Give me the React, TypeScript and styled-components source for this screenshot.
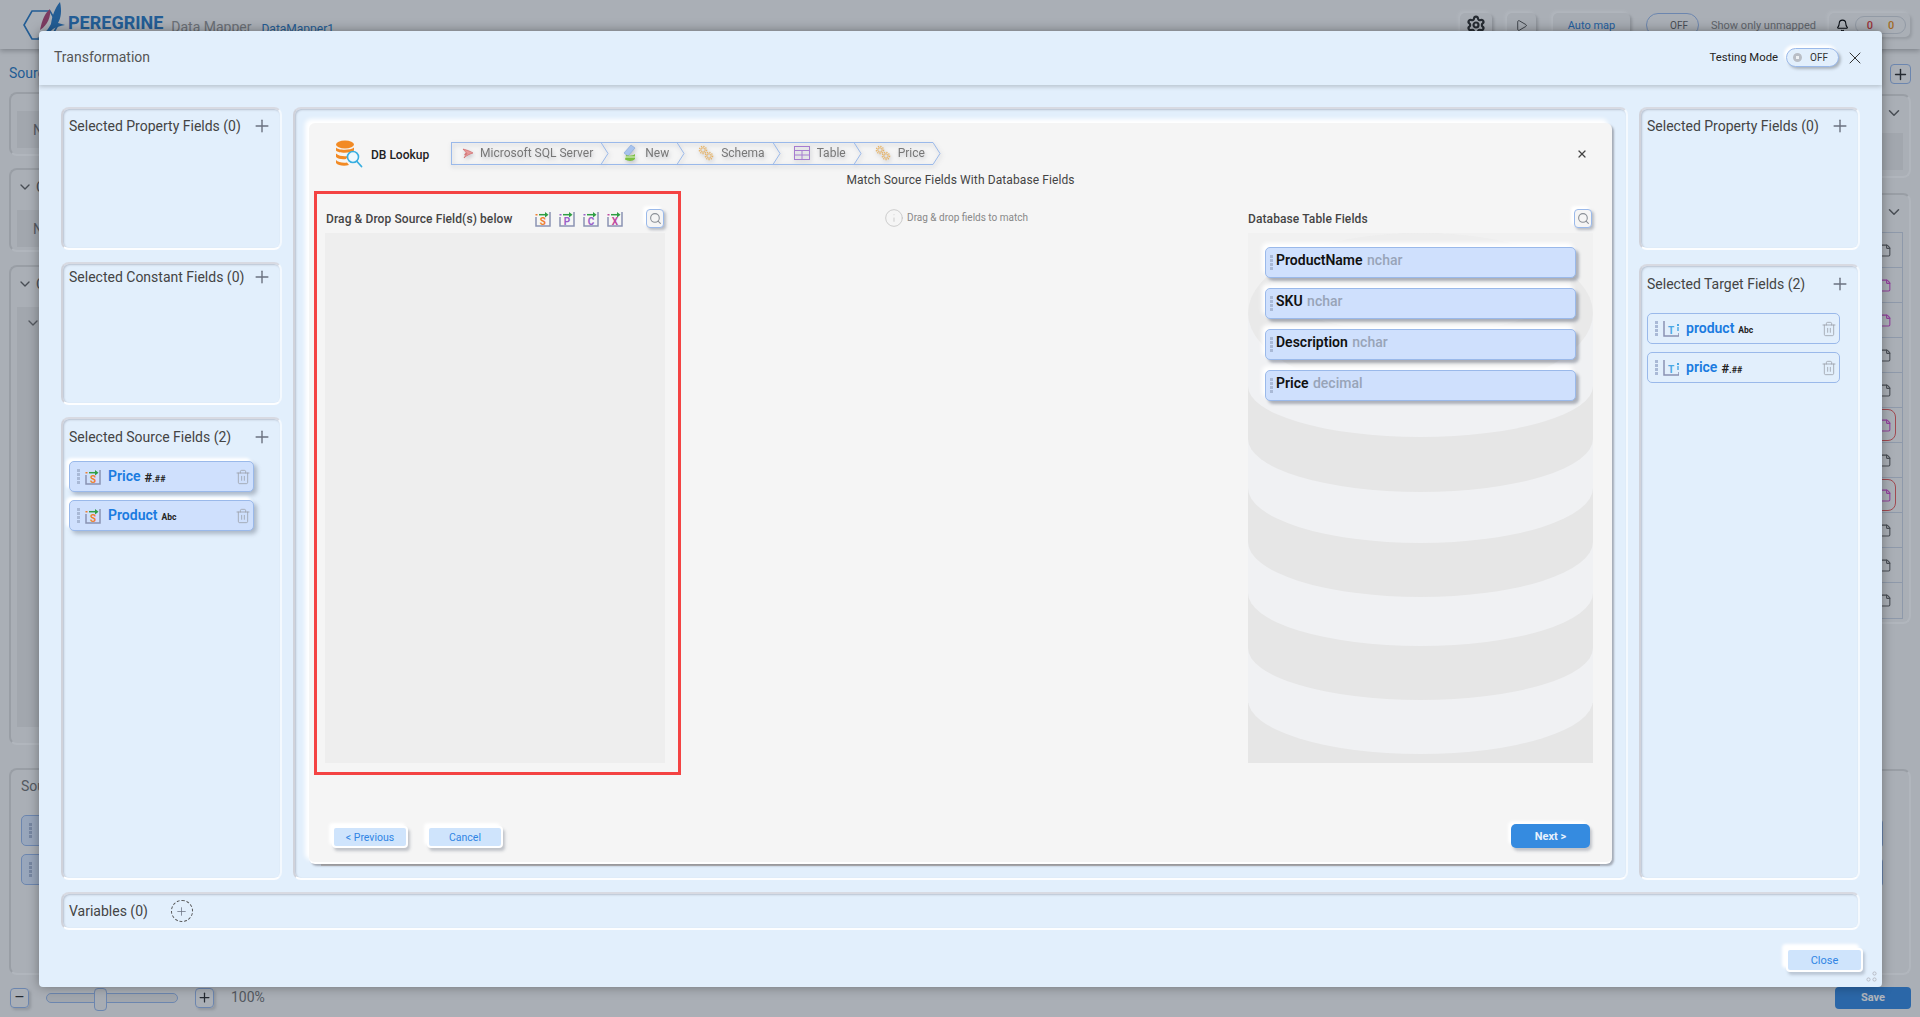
import React from "react";
import styled, { createGlobalStyle } from "styled-components";
import { Bell, ChevronDown, File, Info, Play, Plus, Search, Settings, Trash2, X } from "lucide-react";

const GlobalStyle = createGlobalStyle`
  html, body {
    margin: 0;
    overflow: hidden;
    font-family: Roboto, "Liberation Sans", sans-serif;
    background: #f5f5f5;
  }
  #root {
    width: 1920px;
    height: 1017px;
  }
`;

const BLUE_BORDER = "#9ab9ea";
const MODAL_BG = "#e2effc";

/* ---------- page behind the dialog ---------- */

const Page = styled.div`
  position: relative;
  width: 1920px;
  height: 1017px;
  display: flex;
  flex-direction: column;
  overflow: hidden;
  background: #f5f5f5;
`;

const TopBar = styled.header`
  height: 49px;
  flex: none;
  display: flex;
  align-items: flex-start;
  padding-left: 22px;
  box-sizing: border-box;
  box-shadow: 0 2px 5px rgba(0, 0, 0, 0.25);
`;

const BrandName = styled.span`
  margin: 11px 0 0 2px;
  font-size: 18px;
  line-height: 24px;
  font-weight: 700;
  color: #2e7cc4;
`;

const AppName = styled.span`
  margin: 18px 0 0 8px;
  font-size: 14px;
  line-height: 18px;
  color: #999;
`;

const DocName = styled.span`
  margin: 21px 0 0 10px;
  font-size: 12px;
  line-height: 16px;
  color: #2e7cc4;
`;

const TopTools = styled.div`
  margin-left: auto;
  display: flex;
  align-items: center;
  height: 24px;
  margin-top: 13px;
  padding-right: 10px;
`;

const TopButton = styled.div<{ $w: number; $ml: number }>`
  width: ${(p) => p.$w}px;
  margin-left: ${(p) => p.$ml}px;
  height: 24px;
  box-sizing: border-box;
  display: flex;
  align-items: center;
  justify-content: center;
  border-radius: 5px;
  font-size: 11px;
  color: #2e7fd4;
  background: #f0f0f0;
  box-shadow: -2px -2px 3px #fff, 2px 2px 3px rgba(0, 0, 0, 0.18);
  svg {
    color: #333;
  }
`;

const BgToggle = styled.div`
  width: 53px;
  height: 24px;
  margin-left: 16px;
  box-sizing: border-box;
  border: 1px solid ${BLUE_BORDER};
  border-radius: 12px;
  display: flex;
  align-items: center;
  justify-content: flex-end;
  padding-right: 10px;
  font-size: 10px;
  color: #666;
`;

const BgHint = styled.span`
  margin-left: 12px;
  width: 118px;
  font-size: 11px;
  color: #888;
`;

const Counter = styled.div`
  width: 81px;
  height: 24px;
  display: flex;
  align-items: center;
  gap: 6px;
  padding-left: 7px;
  box-sizing: border-box;
  border-radius: 5px;
  box-shadow: -2px -2px 3px #fff, 2px 2px 3px rgba(0, 0, 0, 0.12);
`;

const CountPill = styled.div`
  flex: 1;
  height: 18px;
  margin-right: 4px;
  box-sizing: border-box;
  border: 1px solid #d2d6dc;
  border-radius: 9px;
  display: flex;
  align-items: center;
  justify-content: center;
  gap: 15px;
  font-size: 11px;
  font-weight: 500;
  b:first-child {
    font-weight: 500;
    color: #e04040;
  }
  b:last-child {
    font-weight: 500;
    color: #e89020;
  }
`;

const Main = styled.div`
  flex: 1;
  display: flex;
  justify-content: space-between;
  padding: 0 9px;
`;

const BgColumn = styled.div`
  width: 400px;
  display: flex;
  flex-direction: column;
`;

const BgHeading = styled.div<{ $h: number }>`
  height: ${(p) => p.$h}px;
  display: flex;
  align-items: flex-start;
  justify-content: flex-end;
  box-sizing: border-box;
`;

const SourceLink = styled.span`
  width: 100%;
  margin: 15px 0 0 -1px;
  font-size: 14px;
  line-height: 18px;
  color: #2e7cc4;
`;

const SquareButton = styled.div`
  width: 21px;
  height: 20px;
  margin-top: 15px;
  box-sizing: border-box;
  border: 1px solid ${BLUE_BORDER};
  border-radius: 4px;
  display: flex;
  align-items: center;
  justify-content: center;
  color: #333;
  background: #f5f5f5;
`;

const BgPanel = styled.div<{ $h: number; $mt?: number; $pad?: string; $pushed?: boolean }>`
  height: ${(p) => p.$h}px;
  margin-top: ${(p) => (p.$pushed ? "auto" : `${p.$mt ?? 0}px`)};
  padding: ${(p) => p.$pad ?? "8px"};
  box-sizing: border-box;
  border: 2px solid;
  border-color: #dcdcdc #fff #fff #dcdcdc;
  border-radius: 8px;
  flex: none;
  font-size: 14px;
  color: #777;
`;

const BgBox = styled.div<{ $h: number; $mt?: number; $top?: boolean }>`
  height: ${(p) => p.$h}px;
  margin-top: ${(p) => p.$mt ?? 0}px;
  background: #e9e9e9;
  display: flex;
  align-items: ${(p) => (p.$top ? "flex-start" : "center")};
  padding: ${(p) => (p.$top ? "8px 0 0 8px" : "0 0 0 16px")};
  box-sizing: border-box;
  font-size: 14px;
  color: #777;
`;

const BgHead = styled.div<{ $end?: boolean }>`
  height: 18px;
  display: flex;
  align-items: center;
  justify-content: ${(p) => (p.$end ? "flex-end" : "flex-start")};
  gap: 3px;
  color: #666;
`;

const BgRows = styled.div`
  border: 1px solid #ccd4e4;
  margin-top: 11px;
`;

const BgRow = styled.div`
  height: 35px;
  box-sizing: border-box;
  padding: 1px 6px 1px 0;
  border-bottom: 1px solid #ccd4e4;
  &:last-child {
    border-bottom: 0;
  }
`;

const BgRowPill = styled.div<{ $flag: boolean; $tone: string }>`
  height: 100%;
  box-sizing: border-box;
  display: flex;
  align-items: center;
  justify-content: flex-end;
  padding-right: 3px;
  border-radius: 8px;
  border: 1px solid ${(p) => (p.$flag ? "#e86060" : "transparent")};
  color: ${(p) => p.$tone};
`;

const BgField = styled.div<{ $mt?: number }>`
  height: 31px;
  margin-top: ${(p) => p.$mt ?? 0}px;
  padding-left: 7px;
  box-sizing: border-box;
  display: flex;
  align-items: center;
  border: 1px solid ${BLUE_BORDER};
  border-radius: 5px;
  background: #dbe8fd;
`;

const BottomBar = styled.footer`
  height: 23px;
  flex: none;
  margin: 11px 0 8px;
  padding: 0 9px 0 10px;
  display: flex;
  align-items: center;
`;

const ZoomButton = styled.div<{ $ml?: number }>`
  width: 19px;
  height: 20px;
  margin-left: ${(p) => p.$ml ?? 0}px;
  box-sizing: border-box;
  border: 1px solid ${BLUE_BORDER};
  border-radius: 4px;
  display: flex;
  align-items: center;
  justify-content: center;
  color: #333;
  box-shadow: 2px 2px 3px rgba(0, 0, 0, 0.15);
`;

const ZoomTrack = styled.div`
  position: relative;
  width: 132px;
  height: 10px;
  margin-left: 17px;
  box-sizing: border-box;
  border: 1px solid ${BLUE_BORDER};
  border-radius: 5px;
  background: #e8e8e8;
`;

const ZoomThumb = styled.div`
  position: absolute;
  left: 47px;
  top: -6px;
  width: 13px;
  height: 23px;
  box-sizing: border-box;
  border: 1px solid ${BLUE_BORDER};
  border-radius: 4px;
  background: #f0f0f0;
`;

const ZoomValue = styled.span`
  margin: 0 0 2px 17px;
  font-size: 14px;
  color: #777;
`;

const SaveButton = styled.div`
  margin-left: auto;
  width: 76px;
  height: 22px;
  border-radius: 4px;
  background: #3a8be0;
  color: #fff;
  display: flex;
  align-items: center;
  justify-content: center;
  font-size: 11px;
  font-weight: 700;
`;

const Backdrop = styled.div`
  position: absolute;
  inset: 0;
  background: rgba(12, 28, 50, 0.32);
`;

/* ---------- dialog ---------- */

const Modal = styled.section`
  position: absolute;
  left: 39px;
  top: 31px;
  width: 1843px;
  height: 956px;
  display: flex;
  flex-direction: column;
  background: ${MODAL_BG};
  border-radius: 4px;
  box-shadow: 0 0 12px rgba(0, 0, 0, 0.35);
`;

const ModalHeader = styled.div`
  height: 54px;
  box-sizing: border-box;
  flex: none;
  display: flex;
  align-items: center;
  padding: 0 17px 1px 15px;
  box-shadow: 0 2px 4px rgba(0, 0, 0, 0.18);
  border-radius: 4px 4px 0 0;
`;

const ModalTitle = styled.h2`
  margin: 0 0 1px;
  font-size: 14px;
  font-weight: 400;
  color: #555;
`;

const TestingLabel = styled.span`
  margin-left: auto;
  font-size: 11.300px;
  color: #222;
`;

const Toggle = styled.div`
  width: 53px;
  height: 19px;
  margin: 0 6px 0 8px;
  box-sizing: border-box;
  display: flex;
  align-items: center;
  justify-content: space-between;
  padding: 0 10px 0 6px;
  border: 1px solid ${BLUE_BORDER};
  border-radius: 10px;
  background: ${MODAL_BG};
  box-shadow: -2px -3px 3px #fff, 2px 2px 3px rgba(0, 0, 0, 0.25);
  font-size: 10px;
  color: #333;
`;

const ToggleKnob = styled.i`
  width: 9px;
  height: 9px;
  border-radius: 50%;
  background: radial-gradient(circle, #eef1f4 0 25%, #b9bec6 30% 70%, #dfe3e8 75%);
`;

const PlainIcon = styled.span`
  display: flex;
  color: #333;
`;

const ModalBody = styled.div`
  flex: none;
  height: 773px;
  margin: 22px 22px 0;
  display: grid;
  grid-template-columns: 221px 1335px 221px;
  column-gap: 11px;
`;

const FieldColumn = styled.div`
  display: flex;
  flex-direction: column;
  gap: 12px;
`;

const Panel = styled.div<{ $grow?: boolean; $h?: number; $pt?: number; $mt?: number }>`
  box-sizing: border-box;
  height: ${(p) => (p.$h ? `${p.$h}px` : "auto")};
  flex: ${(p) => (p.$grow ? 1 : "none")};
  margin-top: ${(p) => p.$mt ?? 0}px;
  padding: ${(p) => p.$pt ?? 9}px 6px 9px;
  border: 2px solid;
  border-color: #d8dae2 #f4f9fe #fdfeff #d0d2da;
  border-radius: 8px;
  box-shadow: inset 1px 1px 2px rgba(90, 90, 105, 0.3);
`;

const PanelHead = styled.div`
  display: flex;
  align-items: center;
  justify-content: space-between;
  height: 18px;
  padding-right: 2px;
  font-size: 14px;
  color: #444;
  svg {
    color: #6b7280;
    flex: none;
  }
`;

const FieldList = styled.div<{ $mt: number }>`
  display: flex;
  flex-direction: column;
  gap: 8px;
  margin-top: ${(p) => p.$mt}px;
`;

const SourceField = styled.div<{ $raised?: boolean }>`
  height: 31px;
  width: ${(p) => (p.$raised ? "185px" : "193px")};
  box-sizing: border-box;
  display: flex;
  align-items: center;
  padding: 0 2px 0 7px;
  border: 1px solid ${BLUE_BORDER};
  border-radius: 5px;
  background: ${(p) => (p.$raised ? "#cfe0fd" : "transparent")};
  box-shadow: ${(p) =>
    p.$raised ? "-3px -3px 3px #fff, 3px 3px 4px rgba(70, 80, 100, 0.35)" : "none"};
`;

const Grip = styled.i<{ $mr?: number }>`
  width: 3px;
  height: 15px;
  flex: none;
  margin-right: ${(p) => p.$mr ?? 0}px;
  background: repeating-linear-gradient(#a9b9d6 0 3px, transparent 3px 4px);
`;

const FieldName = styled.span`
  margin: 0 0 2px 7px;
  font-size: 14px;
  font-weight: 600;
  color: #1a7be0;
`;

const TypeTag = styled.span<{ $abc?: boolean }>`
  margin: 2px auto 0 4px;
  font-size: ${(p) => (p.$abc ? "8.5px" : "9px")};
  font-weight: 700;
  color: #222;
  b {
    font-size: 13px;
    font-weight: 700;
  }
`;

const TrashIcon = styled(Trash2)`
  flex: none;
  color: #9aa0a8;
`;

const CenterPanel = styled(Panel)`
  padding: 14px;
  display: flex;
`;

const Card = styled.div`
  flex: 1;
  display: flex;
  flex-direction: column;
  background: #f5f5f5;
  border-radius: 6px;
  border-bottom: 2px solid #fff;
  box-shadow: -4px -4px 4px #fff, 2px 2px 2px rgba(90, 90, 100, 0.45), 0 14px 0 -12px #c8c8c8;
`;

const CardHeader = styled.div`
  margin-top: 17px;
  height: 27px;
  flex: none;
  display: flex;
  align-items: center;
  padding: 0 24px 0 26px;
`;

const CardTitle = styled.span`
  margin: 2px 0 0 8px;
  width: 80px;
  font-size: 12px;
  font-weight: 500;
  color: #222;
`;

const Breadcrumb = styled.nav`
  display: flex;
  height: 23px;
  filter: drop-shadow(1px 2px 2px rgba(60, 70, 90, 0.3));
`;

const Crumb = styled.div<{ $first?: boolean }>`
  position: relative;
  height: 23px;
  box-sizing: border-box;
  display: flex;
  align-items: center;
  gap: ${(p) => (p.$first ? 6 : 7)}px;
  padding: 0 16px 2px ${(p) => (p.$first ? 10 : 21)}px;
  margin-left: ${(p) => (p.$first ? 0 : -8)}px;
  font-size: 12px;
  color: #777;
  border-left: ${(p) => (p.$first ? `1px solid ${BLUE_BORDER}` : "0")};
  background:
    linear-gradient(${BLUE_BORDER}, ${BLUE_BORDER}) left top / calc(100% - 8px) 1px no-repeat,
    linear-gradient(${BLUE_BORDER}, ${BLUE_BORDER}) left bottom / calc(100% - 8px) 1px no-repeat;
`;

const CrumbTip = styled.svg`
  position: absolute;
  right: 0;
  top: 0;
`;

const CardClose = styled.span`
  margin-left: auto;
  display: flex;
  color: #444;
`;

const MatchTitle = styled.div`
  margin-top: 6px;
  height: 14px;
  flex: none;
  text-align: center;
  font-size: 12px;
  line-height: 14px;
  letter-spacing: 0.1px;
  color: #444;
`;

const MatchRow = styled.div`
  margin-top: 4px;
  display: flex;
  flex: none;
  height: 584px;
  padding-left: 5px;
`;

const SourceBox = styled.div`
  width: 367px;
  box-sizing: border-box;
  border: 3px solid #f44343;
  padding: 15px 13px 9px 8px;
  display: flex;
  flex-direction: column;
`;

const WellHead = styled.div`
  height: 19px;
  margin-bottom: 5px;
  flex: none;
  display: flex;
  align-items: center;
  font-size: 12px;
  font-weight: 500;
  letter-spacing: 0.1px;
  color: #444;
`;

const HeadLabel = styled.span`
  margin-left: 1px;
`;

const TypeIcons = styled.div`
  margin-left: auto;
  display: flex;
  gap: 8px;
`;

const SearchButton = styled.span<{ $ml?: number }>`
  margin-left: ${(p) => (p.$ml ? `${p.$ml}px` : "auto")};
  margin-right: 1px;
  width: 18px;
  height: 19px;
  box-sizing: border-box;
  flex: none;
  display: flex;
  align-items: center;
  justify-content: center;
  border: 1px solid ${BLUE_BORDER};
  border-radius: 4px;
  color: #8a8f96;
  background: #f5f5f5;
  box-shadow: -3px -3px 3px #fff, 2px 2px 3px rgba(70, 80, 100, 0.35);
`;

const SourceWell = styled.div`
  flex: 1;
  background: #eeeeee;
`;

const HintColumn = styled.div`
  flex: 1;
  padding: 17px 17px 0 0;
  display: flex;
  justify-content: center;
  align-items: flex-start;
  gap: 3px;
  height: 20px;
  font-size: 10px;
  line-height: 20px;
  color: #888;
  svg {
    color: #c4c4c4;
  }
`;

const TableColumn = styled.div`
  width: 345px;
  margin-right: 19px;
  padding-top: 18px;
  box-sizing: border-box;
  display: flex;
  flex-direction: column;
`;

const TableWell = styled.div`
  position: relative;
  height: 530px;
  background: #f1f1f1;
  padding: 14px 17px;
  box-sizing: border-box;
  display: flex;
  flex-direction: column;
  gap: 10px;
  overflow: hidden;
`;

const WellArt = styled.svg`
  position: absolute;
  left: 0;
  top: 0;
`;

const DbField = styled.div`
  position: relative;
  height: 31px;
  flex: none;
  box-sizing: border-box;
  display: flex;
  align-items: center;
  gap: 3px;
  padding-left: 4px;
  border: 1px solid ${BLUE_BORDER};
  border-radius: 5px;
  background: #cfe0fd;
  box-shadow: -3px -4px 4px #fff, 3px 3px 3px rgba(70, 80, 100, 0.4);
`;

const DbName = styled.span`
  margin-bottom: 6px;
  font-size: 14px;
  font-weight: 600;
  color: #111;
`;

const DbType = styled.span`
  margin-left: 1px;
  font-weight: 500;
  color: #98a4b8;
`;

const CardFooter = styled.div`
  margin-top: auto;
  height: 24px;
  margin-bottom: 14px;
  padding: 0 22px 0 23px;
  display: flex;
  align-items: center;
  gap: 19px;
`;

const GhostButton = styled.div`
  width: 76px;
  height: 22px;
  margin-top: 2px;
  box-sizing: border-box;
  display: flex;
  align-items: center;
  justify-content: center;
  background: #cfe4fc;
  border: 2px solid #fff;
  border-radius: 4px;
  font-size: 10.500px;
  color: #2f84e4;
  box-shadow: -3px -3px 3px #fff, 2px 3px 3px rgba(70, 80, 100, 0.3);
`;

const NextButton = styled.div`
  margin-left: auto;
  width: 79px;
  height: 24px;
  display: flex;
  align-items: center;
  justify-content: center;
  background: #358be0;
  border-radius: 5px;
  font-size: 11px;
  font-weight: 700;
  color: #e8f2fd;
  box-shadow: -3px -3px 3px #fff, 2px 3px 3px rgba(70, 80, 100, 0.3);
`;

const VariablesBar = styled.div`
  height: 38px;
  margin: 12px 22px 0;
  box-sizing: border-box;
  flex: none;
  display: flex;
  align-items: center;
  padding: 0 6px;
  border: 2px solid;
  border-color: #d8dae2 #f4f9fe #fdfeff #d0d2da;
  border-radius: 8px;
  box-shadow: inset 1px 1px 2px rgba(90, 90, 105, 0.3);
  font-size: 14px;
  color: #444;
`;

const DashedAdd = styled.span`
  width: 22px;
  height: 22px;
  margin-left: 23px;
  box-sizing: border-box;
  border: 1px dashed #555;
  border-radius: 50%;
  display: flex;
  align-items: center;
  justify-content: center;
  color: #6b7280;
`;

const ModalFooter = styled.div`
  margin-top: 18px;
  padding-right: 19px;
  display: flex;
  justify-content: flex-end;
`;

const CloseButton = styled(GhostButton)`
  width: 77px;
  height: 24px;
  margin-top: 0;
  font-size: 11px;
  box-shadow: -4px -4px 3px #fff, 2px 3px 3px rgba(70, 80, 100, 0.25);
`;

const ResizeDots = styled.svg`
  position: absolute;
  right: 5px;
  bottom: 5px;
`;

/* ---------- drawings ---------- */

const Logo = () => (
  <svg width="44" height="41" viewBox="0 0 44 41">
    <path d="M10 11h18l8 14-8 14H10L2 25z" fill="none" stroke="#2e7cc4" strokeWidth="1.6" />
    <path d="M18 30c2-10 5-17 10-21 1 7-2 16-10 21z" fill="#b14a78" />
    <path d="M15 38c8-4 12-10 14-14 1-8 4-16 9-22 2 9 1 16-2 21l7 2c-5 1-9 2-12 4-5 5-10 8-16 9z" fill="#2e7cc4" />
  </svg>
);

const DbLookupIcon = () => (
  <svg width="28" height="28" viewBox="0 0 28 28">
    <ellipse cx="10" cy="4.5" rx="9" ry="4" fill="#f28a24" />
    <path d="M1 7.5c2 3 15 3 18 0v3c-3 3-16 3-18 0z" fill="#f28a24" />
    <path d="M1 13.5c3 3 9 3 12 2.5l-2 3c-4 .5-8 0-10-2z" fill="#f28a24" />
    <path d="M1 20c2 2.500 7 3 11 2.500l2 2.500c-5 1.500-11 .5-13-2z" fill="#f28a24" />
    <circle cx="18" cy="17" r="5.500" fill="#eef8fd" stroke="#38aee0" strokeWidth="1.600" />
    <path d="M22 21.500l4.500 5" stroke="#38aee0" strokeWidth="1.800" strokeLinecap="round" />
  </svg>
);

const SqlIcon = () => (
  <svg width="12" height="12" viewBox="0 0 12 12">
    <path
      d="M1 2c4 1 8 2.500 10 4-3 1-6 2-9 5 1-2 2-3.500 3-4.500L2.500 8 4 5.500 1 2z"
      fill="#e79a9a"
      stroke="#c94a4a"
      strokeWidth="0.5"
    />
  </svg>
);

const NewDbIcon = () => (
  <svg width="16" height="18" viewBox="0 0 16 18">
    <path d="M2 9l7-8 4 3-7 8z" fill="#a9c4ee" stroke="#7fa2d8" strokeWidth="0.6" />
    <path d="M4 11c3 1.500 7 .5 9-1v5c-2 2.500-7 2.500-10 .5z" fill="#7cc142" />
    <path d="M3 13h10" stroke="#fff" strokeWidth="0.8" />
  </svg>
);

const GearsIcon = () => (
  <svg width="16" height="16" viewBox="0 0 16 16" fill="none" stroke="#e7b366">
    <circle cx="5" cy="5" r="2.200" strokeWidth="1" />
    <circle cx="5" cy="5" r="3.600" strokeWidth="1.400" strokeDasharray="1.300 1.100" />
    <circle cx="11" cy="11" r="2.200" strokeWidth="1" />
    <circle cx="11" cy="11" r="3.600" strokeWidth="1.400" strokeDasharray="1.300 1.100" />
  </svg>
);

const TableIcon = () => (
  <svg width="16" height="14" viewBox="0 0 16 14" fill="none" stroke="#a67ccf" strokeWidth="1">
    <rect x="0.500" y="0.500" width="15" height="13" />
    <path d="M.5 4.500h15M.5 9h15M8 4.500v9" />
  </svg>
);

const SourceTypeIcon = ({ letter, color }: { letter: string; color: string }) => (
  <svg width="16" height="16" viewBox="0 0 16 16">
    <path d="M1 6v9h14V1" fill="none" stroke="#8a93b3" strokeWidth="1.500" />
    <rect x="0.500" y="3" width="2" height="1.500" fill={color} />
    <path d="M4 3.700h7" stroke="#2f9e44" strokeWidth="1.500" />
    <path d="M10 1l3.500 2.700L10 6.400z" fill="#2f9e44" />
    <text x="8" y="13.500" fontSize="10" fontWeight="700" textAnchor="middle" fill={color} fontFamily="Roboto, sans-serif">
      {letter}
    </text>
  </svg>
);

const TargetTypeIcon = () => (
  <svg width="16" height="16" viewBox="0 0 16 16">
    <path d="M1 0v15h15v-3" fill="none" stroke="#8a93b3" strokeWidth="1.500" />
    <text x="8" y="12.500" fontSize="10" fontWeight="700" textAnchor="middle" fill="#4aa8e4" fontFamily="Roboto, sans-serif">
      T
    </text>
    <rect x="14" y="3" width="2" height="2" fill="#4aa8e4" />
    <rect x="14.300" y="6" width="1.400" height="4" fill="#4aa8e4" />
  </svg>
);

const DatabaseArt = () => {
  const bands: Array<[number, number, string]> = [
    [467, 521, "#f0f1f3"],
    [415, 467, "#e6e6e6"],
    [360, 413, "#f0f1f3"],
    [309, 364, "#e6e6e6"],
    [255, 310, "#f0f1f3"],
    [206, 259, "#e6e6e6"],
    [153, 204, "#f0f1f3"],
  ];
  return (
    <WellArt width="345" height="530" viewBox="0 0 345 530">
      <rect width="345" height="60" fill="#e6e6e6" y="470" />
      {bands.map(([side, bottom, fill]) => (
        <path
          key={side}
          d={`M0 0H345V${side}A172.500 ${bottom - side} 0 0 1 0 ${side}Z`}
          fill={fill}
        />
      ))}
      <path d="M0 0H345V80H0Z" fill="#f1f1f1" />
      <ellipse cx="172.500" cy="80" rx="172.500" ry="80" fill="#e9e9e9" />
      <ellipse cx="172.500" cy="50" rx="150" ry="50" fill="#eeeeee" />
    </WellArt>
  );
};

/* ---------- data ---------- */

const fileRows = [
  ["#666", false],
  ["#d050d0", false],
  ["#d050d0", false],
  ["#666", false],
  ["#666", false],
  ["#d050d0", true],
  ["#666", false],
  ["#d050d0", true],
  ["#666", false],
  ["#666", false],
  ["#666", false],
] as const;

const dbFields = [
  ["ProductName", "nchar"],
  ["SKU", "nchar"],
  ["Description", "nchar"],
  ["Price", "decimal"],
];

const sourceIcons = [
  ["S", "#f08030"],
  ["P", "#9a60c8"],
  ["C", "#9a60c8"],
  ["X", "#c04aa0"],
];

const crumbs = [
  { label: "New", icon: <NewDbIcon /> },
  { label: "Schema", icon: <GearsIcon /> },
  { label: "Table", icon: <TableIcon /> },
  { label: "Price", icon: <GearsIcon /> },
];

const Tip = () => (
  <CrumbTip width="9" height="23" viewBox="0 0 9 23">
    <path d="M0 .5h1L8 11.500 1 22.500H0" fill="none" stroke={BLUE_BORDER} strokeWidth="1" />
  </CrumbTip>
);

const FieldsHead = ({ children }: { children: string }) => (
  <PanelHead>
    {children}
    <Plus size={20} strokeWidth={1.7} />
  </PanelHead>
);

export default function App() {
  return (
    <Page>
      <GlobalStyle />
      <TopBar>
        <Logo />
        <BrandName>PEREGRINE</BrandName>
        <AppName>Data Mapper</AppName>
        <DocName>DataMapper1</DocName>
        <TopTools>
          <TopButton $w={32} $ml={0}>
            <Settings size={20} strokeWidth={2.6} />
          </TopButton>
          <TopButton $w={29} $ml={15}>
            <Play size={13} strokeWidth={1.5} />
          </TopButton>
          <TopButton $w={77} $ml={17}>
            Auto map
          </TopButton>
          <BgToggle>OFF</BgToggle>
          <BgHint>Show only unmapped</BgHint>
          <Counter>
            <Bell size={13} />
            <CountPill>
              <b>0</b>
              <b>0</b>
            </CountPill>
          </Counter>
        </TopTools>
      </TopBar>

      <Main>
        <BgColumn>
          <BgHeading $h={43}>
            <SourceLink>Source</SourceLink>
          </BgHeading>
          <BgPanel $h={64} $pad="17px 6px 6px">
            <BgBox $h={37}>N</BgBox>
          </BgPanel>
          <BgPanel $h={84} $mt={12} $pad="8px 6px">
            <BgHead>
              <ChevronDown size={16} />C
            </BgHead>
            <BgBox $h={37} $mt={14}>
              N
            </BgBox>
          </BgPanel>
          <BgPanel $h={480} $mt={13} $pad="8px 6px">
            <BgHead>
              <ChevronDown size={16} />C
            </BgHead>
            <BgBox $h={420} $mt={14} $top>
              <ChevronDown size={16} />
            </BgBox>
          </BgPanel>
          <BgPanel $h={207} $mt={23} $pad="8px 10px">
            Source
            <BgField $mt={21}>
              <Grip />
            </BgField>
            <BgField $mt={8}>
              <Grip />
            </BgField>
          </BgPanel>
        </BgColumn>

        <BgColumn>
          <BgHeading $h={45}>
            <SquareButton>
              <Plus size={17} />
            </SquareButton>
          </BgHeading>
          <BgPanel $h={84} $pad="8px 6px">
            <BgHead $end>
              <ChevronDown size={18} />
            </BgHead>
            <BgBox $h={37} $mt={11} />
          </BgPanel>
          <BgPanel $h={431} $mt={15} $pad="8px 6px">
            <BgHead $end>
              <ChevronDown size={18} />
            </BgHead>
            <BgRows>
              {fileRows.map(([tone, flag], i) => (
                <BgRow key={i}>
                  <BgRowPill $flag={flag} $tone={tone}>
                    <File size={13} />
                  </BgRowPill>
                </BgRow>
              ))}
            </BgRows>
          </BgPanel>
          <BgPanel $h={206} $pushed $pad="47px 26px 0 0">
            <BgField />
            <BgField $mt={8} />
          </BgPanel>
        </BgColumn>
      </Main>

      <BottomBar>
        <ZoomButton>–</ZoomButton>
        <ZoomTrack>
          <ZoomThumb />
        </ZoomTrack>
        <ZoomButton $ml={17}>
          <Plus size={15} />
        </ZoomButton>
        <ZoomValue>100%</ZoomValue>
        <SaveButton>Save</SaveButton>
      </BottomBar>

      <Backdrop />

      <Modal>
        <ModalHeader>
          <ModalTitle>Transformation</ModalTitle>
          <TestingLabel>Testing Mode</TestingLabel>
          <Toggle>
            <ToggleKnob />
            OFF
          </Toggle>
          <PlainIcon>
            <X size={20} strokeWidth={1.2} />
          </PlainIcon>
        </ModalHeader>

        <ModalBody>
          <FieldColumn>
            <Panel $h={143} $pt={8}>
              <FieldsHead>Selected Property Fields (0)</FieldsHead>
            </Panel>
            <Panel $h={143} $pt={4}>
              <FieldsHead>Selected Constant Fields (0)</FieldsHead>
            </Panel>
            <Panel $grow>
              <FieldsHead>Selected Source Fields (2)</FieldsHead>
              <FieldList $mt={15}>
                <SourceField $raised>
                  <Grip $mr={5} />
                  <SourceTypeIcon letter="S" color="#f08030" />
                  <FieldName>Price</FieldName>
                  <TypeTag>
                    <b>#</b>.##
                  </TypeTag>
                  <TrashIcon size={16} strokeWidth={1.2} />
                </SourceField>
                <SourceField $raised>
                  <Grip $mr={5} />
                  <SourceTypeIcon letter="S" color="#f08030" />
                  <FieldName>Product</FieldName>
                  <TypeTag $abc>Abc</TypeTag>
                  <TrashIcon size={16} strokeWidth={1.2} />
                </SourceField>
              </FieldList>
            </Panel>
          </FieldColumn>

          <CenterPanel>
            <Card>
              <CardHeader>
                <DbLookupIcon />
                <CardTitle>DB Lookup</CardTitle>
                <Breadcrumb>
                  <Crumb $first>
                    <SqlIcon />
                    Microsoft SQL Server
                    <Tip />
                  </Crumb>
                  {crumbs.map((c) => (
                    <Crumb key={c.label}>
                      {c.icon}
                      {c.label}
                      <Tip />
                    </Crumb>
                  ))}
                </Breadcrumb>
                <CardClose>
                  <X size={12} strokeWidth={2.4} />
                </CardClose>
              </CardHeader>

              <MatchTitle>Match Source Fields With Database Fields</MatchTitle>

              <MatchRow>
                <SourceBox>
                  <WellHead>
                    <HeadLabel>Drag &amp; Drop Source Field(s) below</HeadLabel>
                    <TypeIcons>
                      {sourceIcons.map(([l, c]) => (
                        <SourceTypeIcon key={l} letter={l} color={c} />
                      ))}
                    </TypeIcons>
                    <SearchButton $ml={23}>
                      <Search size={13} />
                    </SearchButton>
                  </WellHead>
                  <SourceWell />
                </SourceBox>

                <HintColumn>
                  <Info size={20} strokeWidth={1} />
                  Drag &amp; drop fields to match
                </HintColumn>

                <TableColumn>
                  <WellHead>
                    <span>Database Table Fields</span>
                    <SearchButton>
                      <Search size={13} />
                    </SearchButton>
                  </WellHead>
                  <TableWell>
                    <DatabaseArt />
                    {dbFields.map(([name, type]) => (
                      <DbField key={name}>
                        <Grip />
                        <DbName>
                          {name} <DbType>{type}</DbType>
                        </DbName>
                      </DbField>
                    ))}
                  </TableWell>
                </TableColumn>
              </MatchRow>

              <CardFooter>
                <GhostButton>&lt; Previous</GhostButton>
                <GhostButton>Cancel</GhostButton>
                <NextButton>Next &gt;</NextButton>
              </CardFooter>
            </Card>
          </CenterPanel>

          <FieldColumn>
            <Panel $h={143} $pt={8}>
              <FieldsHead>Selected Property Fields (0)</FieldsHead>
            </Panel>
            <Panel $grow $mt={2}>
              <FieldsHead>Selected Target Fields (2)</FieldsHead>
              <FieldList $mt={20}>
                <SourceField>
                  <Grip $mr={5} />
                  <TargetTypeIcon />
                  <FieldName>product</FieldName>
                  <TypeTag $abc>Abc</TypeTag>
                  <TrashIcon size={16} strokeWidth={1.2} />
                </SourceField>
                <SourceField>
                  <Grip $mr={5} />
                  <TargetTypeIcon />
                  <FieldName>price</FieldName>
                  <TypeTag>
                    <b>#</b>.##
                  </TypeTag>
                  <TrashIcon size={16} strokeWidth={1.2} />
                </SourceField>
              </FieldList>
            </Panel>
          </FieldColumn>
        </ModalBody>

        <VariablesBar>
          Variables (0)
          <DashedAdd>
            <Plus size={13} strokeWidth={1.4} />
          </DashedAdd>
        </VariablesBar>

        <ModalFooter>
          <CloseButton>Close</CloseButton>
        </ModalFooter>

        <ResizeDots width="11" height="11" viewBox="0 0 11 11" fill="none" stroke="#b8bcc6">
          <circle cx="8.500" cy="2.500" r="1.600" />
          <circle cx="2.500" cy="8.500" r="1.600" />
          <circle cx="8.500" cy="8.500" r="1.600" />
        </ResizeDots>
      </Modal>
    </Page>
  );
}
